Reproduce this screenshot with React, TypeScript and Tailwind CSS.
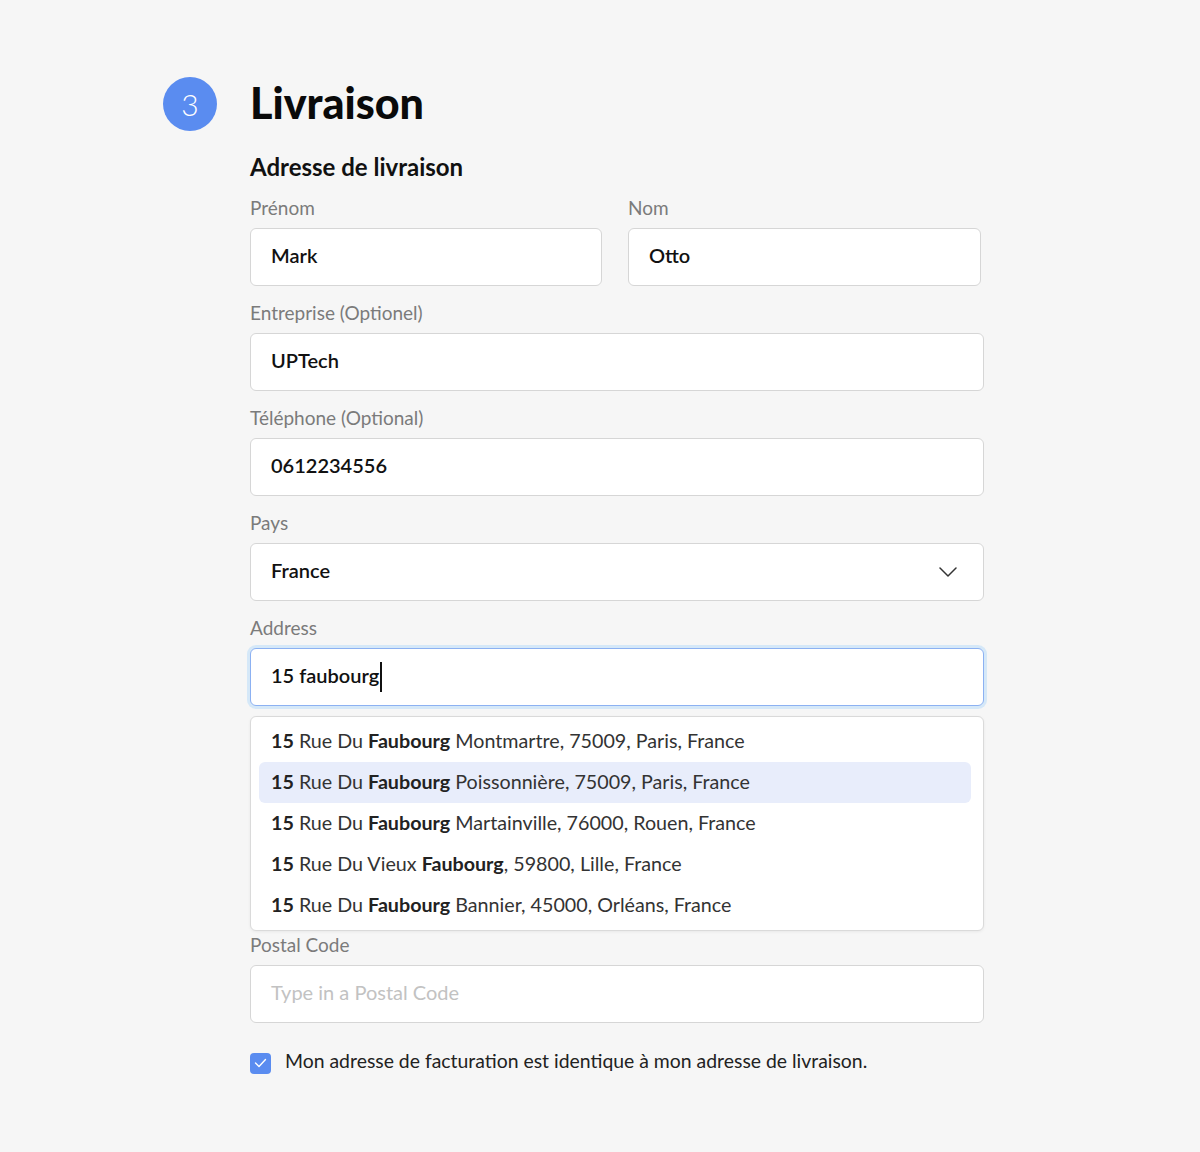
import React from 'react';

const font = { fontFamily: 'Lato, "Noto Sans", sans-serif' };

type Suggestion = { parts: { text: string; bold?: boolean }[]; active?: boolean };

const suggestions: Suggestion[] = [
  { parts: [{ text: '15', bold: true }, { text: ' Rue Du ' }, { text: 'Faubourg', bold: true }, { text: ' Montmartre, 75009, Paris, France' }] },
  { parts: [{ text: '15', bold: true }, { text: ' Rue Du ' }, { text: 'Faubourg', bold: true }, { text: ' Poissonnière, 75009, Paris, France' }], active: true },
  { parts: [{ text: '15', bold: true }, { text: ' Rue Du ' }, { text: 'Faubourg', bold: true }, { text: ' Martainville, 76000, Rouen, France' }] },
  { parts: [{ text: '15', bold: true }, { text: ' Rue Du Vieux ' }, { text: 'Faubourg', bold: true }, { text: ', 59800, Lille, France' }] },
  { parts: [{ text: '15', bold: true }, { text: ' Rue Du ' }, { text: 'Faubourg', bold: true }, { text: ' Bannier, 45000, Orléans, France' }] },
];

const Label: React.FC<{ children: React.ReactNode }> = ({ children }) => (
  <div className="text-[19px] leading-6 text-[#7b7b7b] mb-2">{children}</div>
);

const Box: React.FC<{ children?: React.ReactNode; focused?: boolean; className?: string }> = ({ children, focused, className = '' }) => (
  <div
    className={`h-[58px] rounded-md bg-white flex items-center px-5 pb-[5px] text-[20px] font-semibold text-[#111] ${
      focused
        ? 'border border-[#8cb1f2] shadow-[0_0_0_3px_rgba(173,216,250,0.45)]'
        : 'border border-[#d6d6d6]'
    } ${className}`}
  >
    {children}
  </div>
);

const App: React.FC = () => {
  return (
    <div className="min-h-[1152px] w-full bg-[#f6f6f6]" style={font}>
      <div className="flex pt-[77px] pl-[163px]">
        <div className="w-[54px] h-[54px] rounded-full bg-[#5a8cf0] flex items-center justify-center text-white text-[30px] font-light shrink-0">
          3
        </div>
        <div className="ml-[33px] w-[734px]">
          <h1 className="text-[43px] leading-[52px] font-black text-[#0a0a0a]">Livraison</h1>
          <h2 className="mt-[24px] text-[24px] leading-7 font-bold text-[#111]">Adresse de livraison</h2>

          <div className="mt-[15px] flex flex-col gap-[15px]">
            <div className="flex gap-[26px]">
              <div className="w-[352px]">
                <Label>Prénom</Label>
                <Box>Mark</Box>
              </div>
              <div className="w-[353px]">
                <Label>Nom</Label>
                <Box>Otto</Box>
              </div>
            </div>

            <div>
              <Label>Entreprise (Optionel)</Label>
              <Box>UPTech</Box>
            </div>

            <div>
              <Label>Téléphone (Optional)</Label>
              <Box>0612234556</Box>
            </div>

            <div>
              <Label>Pays</Label>
              <Box className="justify-between pr-[26px]">
                <span>France</span>
                <svg width="18" height="10" viewBox="0 0 18 10" fill="none" className="mt-[5px]">
                  <polyline points="1,1 9,9 17,1" stroke="#333" strokeWidth="1.5" strokeLinecap="round" strokeLinejoin="round" />
                </svg>
              </Box>
            </div>

            <div>
              <Label>Address</Label>
              <Box focused>
                <span>15 faubourg</span>
                <span className="ml-px w-[1.5px] h-[30px] bg-[#111] mt-[5px]" />
              </Box>
              <div className="mt-[10px] rounded-md border border-[#dadada] bg-white py-1 pl-2 pr-3 shadow-[0_1px_3px_rgba(0,0,0,0.06)]">
                {suggestions.map((s, i) => (
                  <div
                    key={i}
                    className={`h-[41px] flex items-center pl-3 pb-[2px] rounded-md text-[19.7px] text-[#333] ${s.active ? 'bg-[#e8edfb]' : ''}`}
                  >
                    <span className="whitespace-pre">
                      {s.parts.map((p, j) =>
                        p.bold ? (
                          <b key={j} className="font-bold text-[#222]">{p.text}</b>
                        ) : (
                          <span key={j}>{p.text}</span>
                        )
                      )}
                    </span>
                  </div>
                ))}
              </div>
            </div>

            <div className="-mt-[13px]">
              <Label>Postal Code</Label>
              <Box>
                <span className="font-normal text-[#c2c2c2]">Type in a Postal Code</span>
              </Box>
            </div>
          </div>

          <div className="mt-[26px] flex items-center gap-[14px]">
            <div className="w-[21px] h-[21px] rounded-[4px] bg-[#5a8cf0] flex items-center justify-center">
              <svg width="13" height="10" viewBox="0 0 13 10" fill="none">
                <polyline points="1.5,5 5,8.5 11.5,1.5" stroke="white" strokeWidth="1.4" strokeLinecap="round" strokeLinejoin="round" />
              </svg>
            </div>
            <span className="text-[19.4px] leading-6 pb-1 text-[#222]">Mon adresse de facturation est identique à mon adresse de livraison.</span>
          </div>
        </div>
      </div>
    </div>
  );
};

export default App;
